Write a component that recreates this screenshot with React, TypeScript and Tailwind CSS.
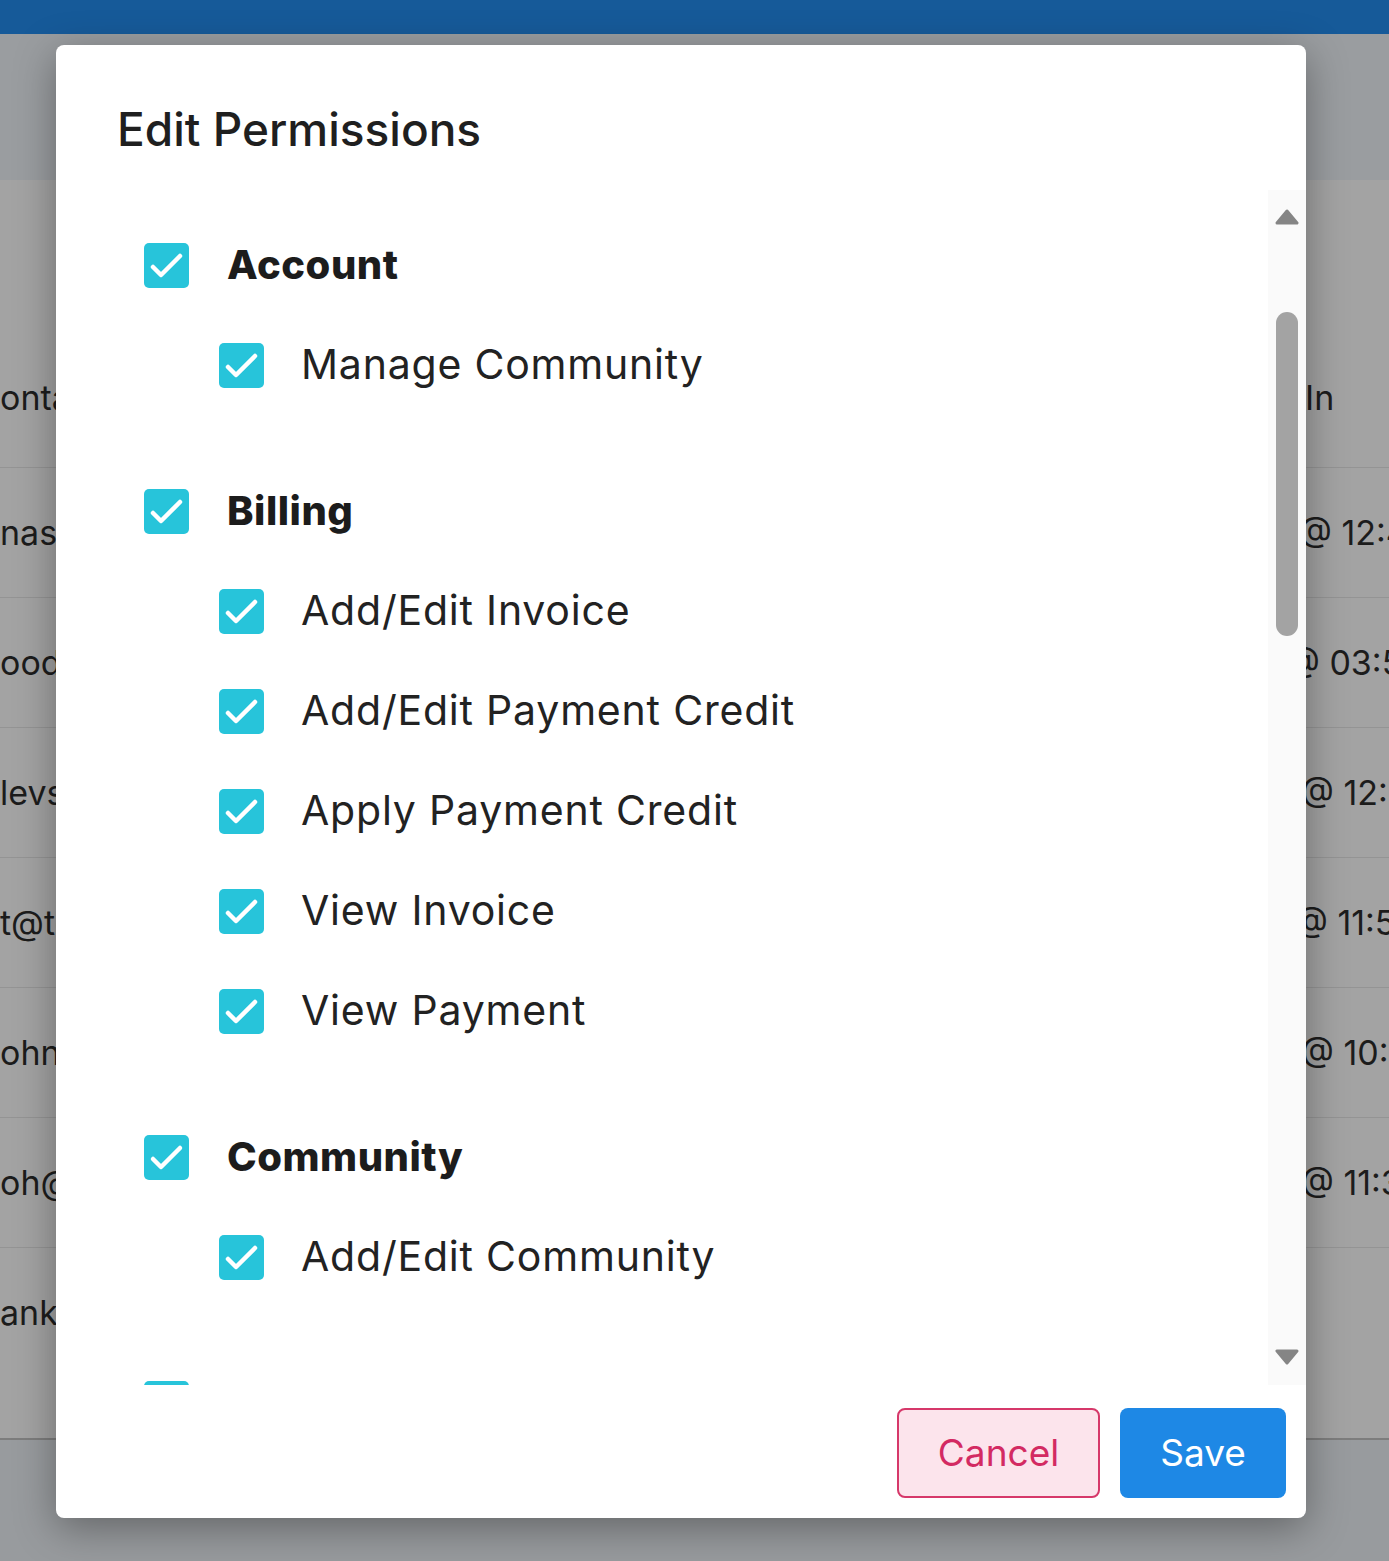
import { ReactNode } from "react";

const groups = [
  { title: "Account", items: ["Manage Community"] },
  {
    title: "Billing",
    items: [
      "Add/Edit Invoice",
      "Add/Edit Payment Credit",
      "Apply Payment Credit",
      "View Invoice",
      "View Payment",
    ],
  },
  { title: "Community", items: ["Add/Edit Community"] },
  { title: "Users", items: ["Add/Edit User"] },
];

const rows = [
  { left: "nasir@mail.com", right: "@ 12:45 PM", rx: "ml-[-6px]" },
  { left: "oodwin@mail.com", right: "@ 03:55 PM", rx: "ml-[-18px]" },
  { left: "levs@mail.com", right: "@ 12:55 PM", rx: "ml-[-4px]" },
  { left: "t@test.com", right: "@ 11:50 AM", rx: "ml-[-10px]" },
  { left: "ohn@mail.com", right: "@ 10:15 AM", rx: "ml-[-4px]" },
  { left: "oh@mail.com", right: "@ 11:30 AM", rx: "ml-[-4px]" },
];

function Check({ className }: { className?: string }) {
  return (
    <span
      className={`flex h-[45px] w-[45px] shrink-0 items-center justify-center rounded-[5px] bg-[#27c4da] ${className ?? ""}`}
    >
      <svg viewBox="0 0 45 45" className="h-[45px] w-[45px]">
        <polyline
          points="9,24 17,32 36,13"
          fill="none"
          stroke="white"
          strokeWidth="4.5"
          strokeLinecap="round"
          strokeLinejoin="round"
        />
      </svg>
    </span>
  );
}

function Row({ children }: { children: ReactNode }) {
  return <div className="flex h-[100px] items-center">{children}</div>;
}

export default function App() {
  return (
    <div className="relative h-[1561px] w-[1389px] overflow-hidden bg-[#989b9e] font-['Inter',sans-serif]">
      {/* page behind the dialog, already dimmed */}
      <div className="h-[34px] bg-[#165a99] shadow-[0_3px_4px_rgba(0,0,0,0.25)]" />
      <div className="h-[146px] bg-[#9a9da0]" />
      <div className="border-b-2 border-[#7d7d7d] bg-[#a3a3a3] text-[34px] text-[#1c1c1c]">
        <div className="h-[148px]" />
        <div className="flex h-[140px] items-center border-b border-[#949494]">
          <div className="w-[80px] whitespace-nowrap">ontact</div>
          <div className="flex-1" />
          <div className="w-[84px] whitespace-nowrap">In</div>
        </div>
        {rows.map((r) => (
          <div
            key={r.left}
            className="flex h-[130px] items-center border-b border-[#949494]"
          >
            <div className="w-[80px] whitespace-nowrap">{r.left}</div>
            <div className="flex-1" />
            <div className="w-[84px] whitespace-nowrap">
              <span className={`inline-block ${r.rx}`}>{r.right}</span>
            </div>
          </div>
        ))}
        <div className="flex h-[190px] items-start pt-[39px]">
          <div className="w-[80px] whitespace-nowrap">ank@mail.com</div>
        </div>
      </div>

      {/* dialog */}
      <div className="absolute left-[56px] top-[45px] flex h-[1473px] w-[1250px] flex-col rounded-[8px] bg-white shadow-[0_10px_40px_rgba(0,0,0,0.35)]">
        <div className="h-[145px] pl-[61px] pt-[56px]">
          <h2 className="text-[46px] leading-[56px] font-medium text-[#1f1f1f]">
            Edit Permissions
          </h2>
        </div>

        <div className="flex h-[1195px]">
          <div className="flex-1 overflow-hidden pl-[88px] pt-[25px]">
            {groups.map((g) => (
              <div key={g.title} className="mb-[46px]">
                <Row>
                  <Check />
                  <span className="ml-[38px] text-[40px] font-extrabold tracking-[0.5px] text-[#1c1c1c]">
                    {g.title}
                  </span>
                </Row>
                {g.items.map((it) => (
                  <Row key={it}>
                    <Check className="ml-[75px]" />
                    <span className="ml-[37px] text-[41px] tracking-[0.8px] text-[#222]">
                      {it}
                    </span>
                  </Row>
                ))}
              </div>
            ))}
          </div>

          {/* scrollbar */}
          <div className="flex w-[38px] flex-col items-center bg-[#fafafa]">
            <svg viewBox="0 0 24 16" className="mt-[19px] h-[16px] w-[24px]">
              <path d="M12 2 L22 14 L2 14 Z" fill="#858585" stroke="#858585" strokeWidth="3" strokeLinejoin="round" />
            </svg>
            <div className="mt-[87px] h-[324px] w-[22px] rounded-full bg-[#a3a3a3]" />
            <div className="flex-1" />
            <svg viewBox="0 0 24 16" className="mb-[20px] h-[16px] w-[24px]">
              <path d="M2 2 L22 2 L12 14 Z" fill="#858585" stroke="#858585" strokeWidth="3" strokeLinejoin="round" />
            </svg>
          </div>
        </div>

        <div className="flex justify-end gap-[20px] pr-[20px] pt-[23px]">
          <button className="h-[90px] w-[203px] rounded-[8px] border-2 border-[#d6386a] bg-[#fce4ec] text-[37px] text-[#d32a62]">
            Cancel
          </button>
          <button className="h-[90px] w-[166px] rounded-[8px] bg-[#1e88e5] text-[37px] text-white">
            Save
          </button>
        </div>
      </div>
    </div>
  );
}
